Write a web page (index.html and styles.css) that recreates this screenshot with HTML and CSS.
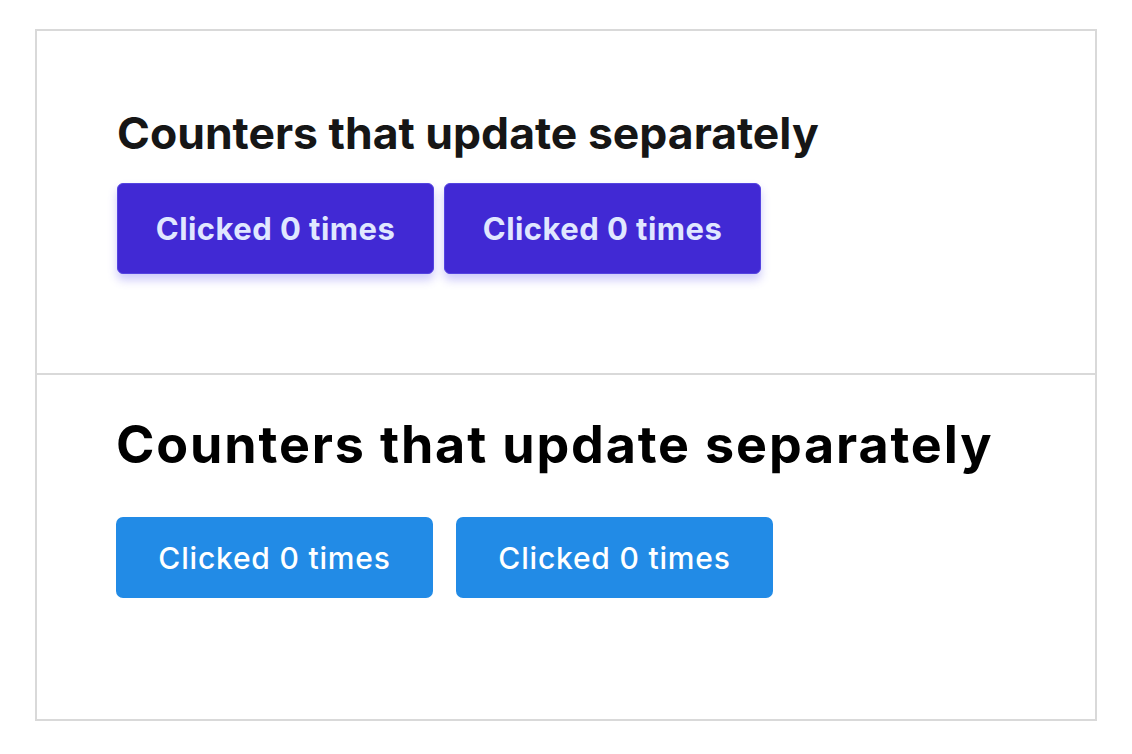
FILE: index.html
```html
<!DOCTYPE html>
<html lang="en">
<head>
<meta charset="utf-8">
<title>Counters</title>
<link rel="stylesheet" href="styles.css">
</head>
<body>
<div class="frame">
  <section class="pane pane-tw">
    <h1 class="title-tw">Counters that update separately</h1>
    <div class="row row-tw">
      <button class="btn-tw">Clicked 0 times</button>
      <button class="btn-tw">Clicked 0 times</button>
    </div>
  </section>
  <section class="pane pane-plain">
    <h1 class="title-plain">Counters that update separately</h1>
    <div class="row row-plain">
      <button class="btn-plain">Clicked 0 times</button>
      <button class="btn-plain">Clicked 0 times</button>
    </div>
  </section>
</div>
</body>
</html>
```

FILE: styles.css
```css
html, body {
  margin: 0;
  padding: 0;
  background: #ffffff;
}

.frame {
  margin: 29px 0 0 35px;
  width: 1058px;
  border: 2px solid #d9d9d9;
  background: #fff;
}

.pane-tw {
  padding: 76px 0 99px 80px;
  border-bottom: 2px solid #d9d9d9;
}

.title-tw {
  margin: 0 0 24px;
  font-family: Inter, "Noto Sans", sans-serif;
  font-weight: 700;
  font-size: 44.5px;
  line-height: 52px;
  color: #161616;
  letter-spacing: 0;
}

.row {
  display: flex;
}

.row-tw {
  gap: 10px;
}

.btn-tw {
  box-sizing: border-box;
  width: 317px;
  height: 91px;
  padding: 0;
  border: 1px solid #5444e0;
  border-radius: 6px;
  background: #4129d4;
  color: #e0e7ff;
  font-family: Inter, "Noto Sans", sans-serif;
  font-weight: 700;
  font-size: 31px;
  letter-spacing: 0.45px;
  box-shadow: 0 6px 10px rgba(99, 90, 240, 0.32);
}

.pane-plain {
  padding: 38px 0 121px 79px;
}

.title-plain {
  margin: 0 0 40px;
  font-family: Inter, "Noto Sans", sans-serif;
  font-weight: 700;
  font-size: 52px;
  line-height: 64px;
  letter-spacing: 1.85px;
  color: #000;
}

.row-plain {
  gap: 23px;
}

.btn-plain {
  box-sizing: border-box;
  width: 317px;
  height: 81px;
  padding: 0;
  border: none;
  border-radius: 7px;
  background: #228be6;
  color: #fff;
  font-family: Inter, "Noto Sans", sans-serif;
  font-weight: 500;
  font-size: 30px;
  letter-spacing: 0.8px;
}
```
